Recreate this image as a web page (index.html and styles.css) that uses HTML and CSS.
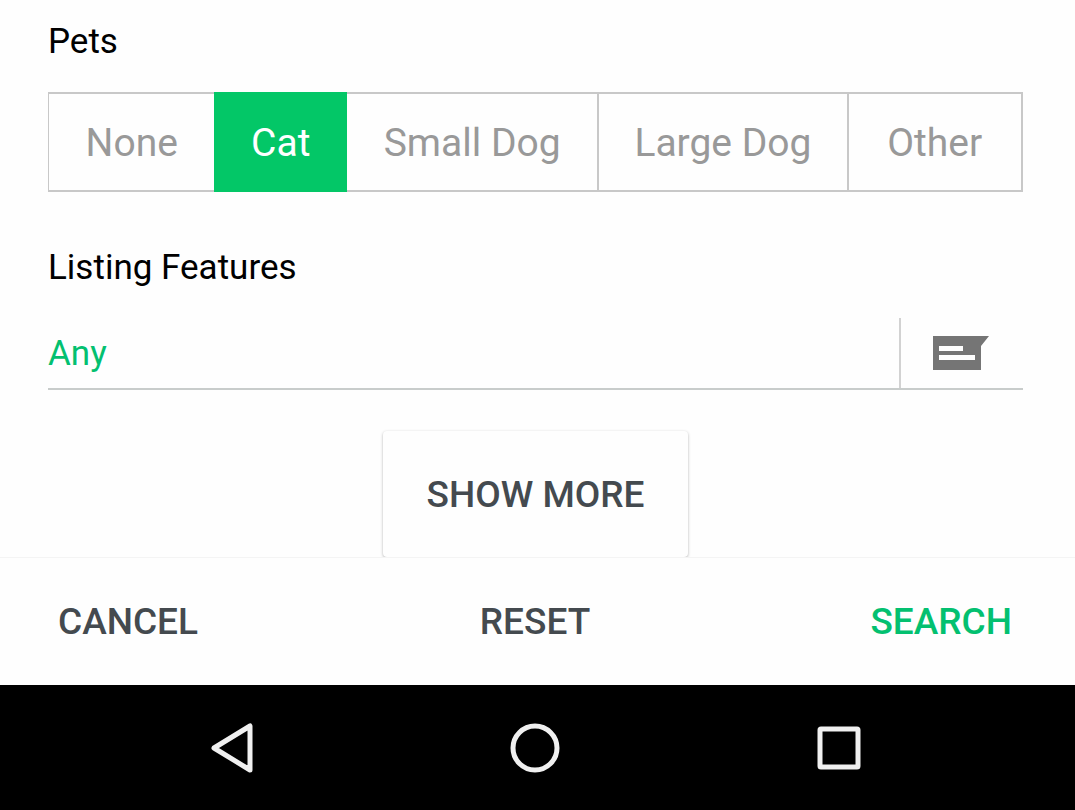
FILE: index.html
```html
<!DOCTYPE html>
<html lang="en">
<head>
<meta charset="utf-8">
<meta name="viewport" content="width=device-width, initial-scale=1">
<title>Search filters</title>
<link rel="stylesheet" href="styles.css">
</head>
<body>
<main class="filters">
  <fieldset class="pets">
    <legend class="heading">Pets</legend>
    <div class="segments">
      <label class="segment"><input type="radio" name="pets" value="none"><span>None</span></label>
      <label class="segment"><input type="radio" name="pets" value="cat" checked><span>Cat</span></label>
      <label class="segment"><input type="radio" name="pets" value="small-dog"><span>Small Dog</span></label>
      <label class="segment"><input type="radio" name="pets" value="large-dog"><span>Large Dog</span></label>
      <label class="segment"><input type="radio" name="pets" value="other"><span>Other</span></label>
    </div>
  </fieldset>
  <label class="heading features-label" for="features">Listing Features</label>
  <div class="field">
    <input class="field-input" id="features" type="text" value="Any">
    <button class="field-button" type="button" aria-label="Choose listing features">
      <svg width="56" height="36" viewBox="0 0 56 36" aria-hidden="true">
        <path fill="#757575" fill-rule="evenodd" d="M0 1H56L48 11V35H0ZM6 11V16H30V11ZM6 20V25H42V20Z"/>
      </svg>
    </button>
  </div>
  <button class="show-more" type="button">SHOW MORE</button>
</main>
<footer class="actions">
  <button class="action" type="button">CANCEL</button>
  <button class="action" type="button">RESET</button>
  <button class="action action-primary" type="button">SEARCH</button>
</footer>
<nav class="system-bar" aria-label="System">
  <button class="system-button" type="button" aria-label="Back">
    <svg width="52" height="52" viewBox="0 0 52 52" aria-hidden="true"><path d="M45 4V48L9 26Z"/></svg>
  </button>
  <button class="system-button" type="button" aria-label="Home">
    <svg width="52" height="52" viewBox="0 0 52 52" aria-hidden="true"><circle cx="26" cy="26" r="22"/></svg>
  </button>
  <button class="system-button" type="button" aria-label="Recent apps">
    <svg width="52" height="52" viewBox="0 0 52 52" aria-hidden="true"><rect x="7" y="7" width="38" height="38" rx="1"/></svg>
  </button>
</nav>
</body>
</html>
```
FILE: styles.css
```css
* {
  box-sizing: border-box;
}

body {
  margin: 0;
  min-height: 100vh;
  display: flex;
  flex-direction: column;
  background: #fefefe;
  font-family: Roboto, "Liberation Sans", sans-serif;
  color: #000;
}

button {
  margin: 0;
  padding: 0;
  border: 0;
  background: none;
  font: inherit;
  color: inherit;
}

.filters {
  flex: 1;
  display: flex;
  flex-direction: column;
  padding: 20px 52px 0 48px;
}

.pets {
  margin: 0;
  padding: 0;
  border: 0;
  min-width: 0;
}

.heading {
  padding: 0;
  font-size: 35px;
  line-height: 44px;
}

.segments {
  display: grid;
  grid-template-columns: 166fr 133fr 251fr 250fr 175fr;
  margin-top: 28px;
  border: 2px solid #c8c8c8;
  border-width: 2px 2px 2px 1px;
}

.segment {
  display: flex;
  align-items: center;
  justify-content: center;
  height: 96px;
  padding-top: 2px;
  border-left: 2px solid #c8c8c8;
  font-size: 39px;
  line-height: 48px;
  color: #999;
}

.segment:first-child {
  border-left: 0;
}

.segment:has(input:checked) {
  margin: -2px 0;
  height: 100px;
  border-left: 0;
  background: #03c767;
  color: #fff;
}

.segment:has(input:checked) + .segment {
  border-left: 0;
}

.segment input {
  position: absolute;
  opacity: 0;
}

.features-label {
  margin-top: 54px;
}

.field {
  display: flex;
  margin-top: 28px;
  height: 72px;
  border-bottom: 2px solid #c8cccb;
}

.field-input {
  flex: 1;
  min-width: 0;
  padding: 0;
  border: 0;
  outline: 0;
  background: none;
  font: inherit;
  font-size: 35px;
  color: #03c070;
}

.field-button {
  width: 124px;
  padding-left: 32px;
  border-left: 2px solid #d2d2d2;
  text-align: left;
}

.field-button svg {
  display: block;
}

.show-more {
  align-self: center;
  margin-top: 41px;
  padding: 0 44px;
  height: 126px;
  border-radius: 4px;
  background: #fefefe;
  box-shadow: 0 1px 3px rgba(0, 0, 0, 0.3);
  font-size: 37px;
  font-weight: 500;
  color: #444a4f;
}

.actions {
  display: grid;
  grid-template-columns: 1fr 1fr 1fr;
  height: 128px;
  padding: 0 63px 0 58px;
  border-top: 1px solid #f4f4f4;
  background: #fefefe;
}

.action {
  font-size: 37px;
  font-weight: 500;
  color: #444a4f;
}

.action:first-child {
  text-align: left;
}

.action-primary {
  text-align: right;
  color: #03c070;
}

.system-bar {
  display: flex;
  justify-content: center;
  gap: 252px;
  height: 126px;
  padding-right: 5px;
  background: #000;
}

.system-button {
  display: flex;
  align-items: center;
}

.system-button svg {
  fill: none;
  stroke: #f0f0f0;
  stroke-width: 5;
  stroke-linejoin: round;
}
```
